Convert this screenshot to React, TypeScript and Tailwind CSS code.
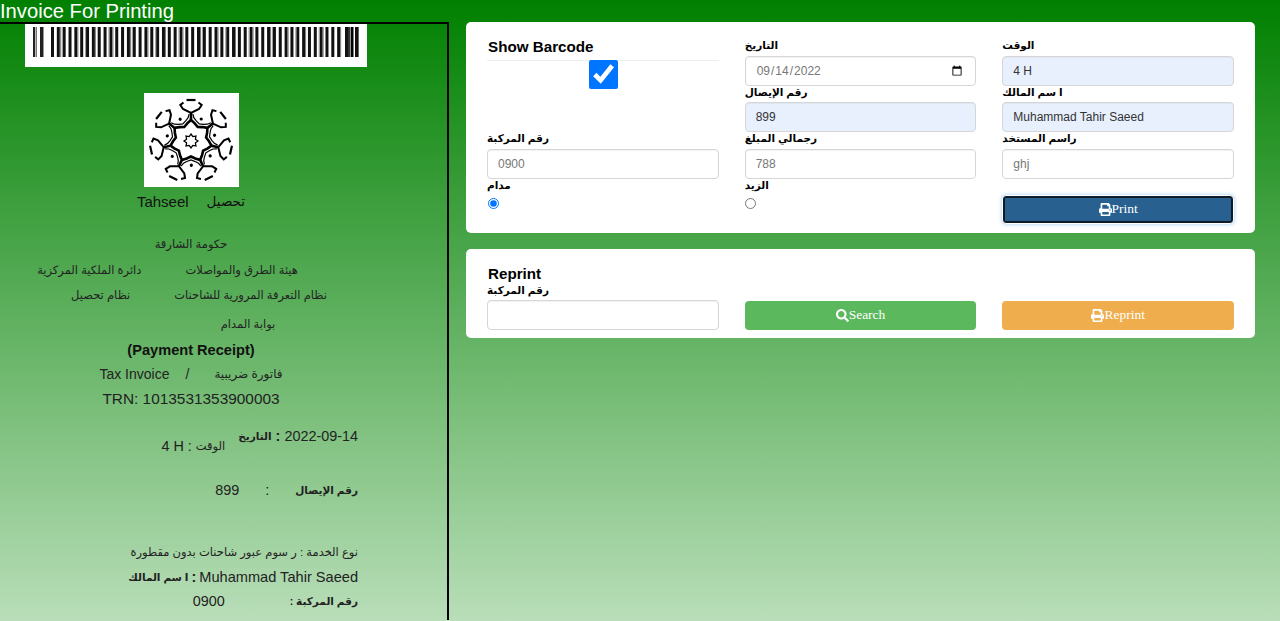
import { FaPrint, FaSearch } from 'react-icons/fa';

const SANS = 'font-["Liberation_Sans","DejaVu_Sans",sans-serif]';

// barcode bars as [x, width, colour]
const bars: [number, number, string][] = [
  [8, 2, '#222'], [10.5, 1.5, '#777'], [15, 3, '#222'], [18, 1, '#999'],
];
for (let i = 0; i < 50; i++) {
  const x = 26 + i * 5.84;
  bars.push([x, 3, '#111']);
  if (i % 3 === 1) bars.push([x + 3, 1, '#777']);
  if (i % 4 === 2) bars.push([x - 1, 1, '#999']);
}
bars.push([320, 3, '#111'], [323, 2.5, '#333'], [326, 2.5, '#000'], [330, 3, '#111'], [333, 1, '#666']);

const Barcode = () => (
  <svg viewBox="0 0 342 43" className="block w-[342px] h-[43px] bg-white">
    {bars.map(([x, w, c], i) => (
      <rect key={i} x={x} y={3} width={w} height={30} fill={c} />
    ))}
  </svg>
);

const polar = (deg: number, r: number) => {
  const a = (deg * Math.PI) / 180;
  return `${(r * Math.sin(a)).toFixed(2)} ${(-r * Math.cos(a)).toFixed(2)}`;
};

const starPoints = Array.from({ length: 16 }, (_, i) => polar(i * 22.5, i % 2 === 0 ? 7 : 4.8)).join(' L');

const Logo = () => (
  <svg viewBox="-47 -48 95 94" className="block w-[95px] h-[94px] bg-white" fill="none" stroke="#000">
    <path d={`M${starPoints}Z`} strokeWidth="1.3" />
    {Array.from({ length: 7 }, (_, k) => (
      <g key={k} transform={`rotate(${(k * 360) / 7})`}>
        <path d="M-4.5 -41H4.5" strokeWidth="2.2" />
        <path d="M-7.5 -38.5L-10.7 -36L-8 -32L0 -28L8 -32L10.7 -36L7.5 -38.5" strokeWidth="2" />
        <path d={`M${polar(0, 28)} L${polar(0, 21)} L${polar(12, 18)} L${polar(25.7, 15.5)} L${polar(39.4, 18)} L${polar(51.4, 21)}`} strokeWidth="2.6" />
        <path d={`M${polar(4, 27)} L${polar(7, 23.5)} L${polar(14, 21)} L${polar(25.7, 19)} L${polar(37.4, 21)} L${polar(44.4, 23.5)} L${polar(47.4, 27)}`} strokeWidth="1.2" />
        <circle cx="10.2" cy="-22" r="1.6" fill="#000" stroke="none" />
      </g>
    ))}
  </svg>
);

const fieldClass =
  'block w-full h-[30px] rounded-[4px] border border-[#d6d6d6] px-[10px] text-[12px] shadow-[inset_0_1px_1px_rgba(0,0,0,0.05)] outline-none';

const labelClass = 'block h-[16.5px] text-[10.5px] leading-[13px] font-bold text-black';

const Field = ({ label, value, fill, type = 'text' }: { label: string; value: string; fill?: boolean; type?: string }) => (
  <div>
    <label className={labelClass}>{label}</label>
    <input
      type={type}
      defaultValue={value}
      className={fill ? `${fieldClass} bg-[#e8f0fe] text-[#333]` : `${fieldClass} bg-white text-[#777]`}
    />
  </div>
);

const Receipt = () => (
  <div className="h-[598px] w-[449px] shrink-0 overflow-hidden border-t-2 border-r-2 border-black text-[#222]">
    <div className="pl-[25px]">
      <Barcode />
    </div>
    <div className="w-[382px] text-center text-[14px]">
      <div className="mt-[26px] flex justify-center">
        <Logo />
      </div>
      <div className="mt-[5px] flex justify-center gap-[18px] leading-[20px] text-[#111]">
        <span className="text-[15px]">Tahseel</span>
        <span className="text-[13.5px]">تحصيل</span>
      </div>
      <p className="mt-[22px] text-[11.5px] leading-[20px]">حكومة الشارقة</p>
      <div className="mt-[6px] flex justify-center gap-[44px] pr-[47px] text-[11.5px] leading-[20px]" dir="rtl">
        <span>هيئة الطرق والمواصلات</span>
        <span>دائرة الملكية المركزية</span>
      </div>
      <div className="mt-[5px] flex justify-center gap-[44px] pl-[16px] text-[11.5px] leading-[20px]" dir="rtl">
        <span>نظام التعرفة المرورية للشاحنات</span>
        <span>نظام تحصيل</span>
      </div>
      <p className="mt-[9px] pl-[114px] text-[11.5px] leading-[20px]">بوابة المدام</p>
      <p className="mt-[6px] text-[14.6px] font-bold leading-[20px] text-[#111]">(Payment Receipt)</p>
      <div className="mt-[4px] flex justify-center leading-[20px]" dir="rtl">
        <span className="ml-[25px] text-[12px]">فاتورة ضريبية</span>
        <span className="ml-[16px]">/</span>
        <span>Tax Invoice</span>
      </div>
      <p className="mt-[5px] text-[15.4px] leading-[20px]">TRN: 1013531353900003</p>
    </div>
    <div className="w-[382px] pr-[24px] text-[14.4px]" dir="rtl">
      <div className="mt-[17px] flex items-start gap-[13px]">
        <span className="flex gap-[4px] leading-[20px]">
          <span>2022-09-14</span>
          <b>:</b>
          <b className="text-[10.5px]">التاريخ</b>
        </span>
        <span className="mt-[10px] flex gap-[4px] leading-[20px]">
          <span className="text-[11.5px]">الوقت</span>
          <span>:</span>
          <span dir="ltr">4 H</span>
        </span>
      </div>
      <div className="mt-[24px] flex gap-[26px] leading-[20px]">
        <b className="text-[10.5px]">رقم الإيصال</b>
        <span>:</span>
        <span>899</span>
      </div>
      <p className="mt-[42px] text-[11.5px] leading-[20px]">نوع الخدمة : ر سوم عبور شاحنات بدون مقطورة</p>
      <p className="mt-[5px] flex gap-[3px] leading-[20px]">
        <span className="text-[14.6px]" dir="ltr">Muhammad Tahir Saeed</span>
        <b>:</b>
        <b className="text-[10.5px]">ا سم المالك</b>
      </p>
      <div className="mt-[4px] flex gap-[65px] leading-[20px]">
        <b className="text-[10.5px]">رقم المركبة :</b>
        <span>0900</span>
      </div>
    </div>
  </div>
);

const ActionButton = ({ className, children }: { className: string; children: React.ReactNode }) => (
  <button
    type="button"
    className={`flex h-[29px] w-full items-center justify-center rounded-[4px] font-["Liberation_Serif",serif] text-[13.5px] text-white ${className}`}
  >
    {children}
  </button>
);

export default function App() {
  return (
    <div className={`h-[621px] overflow-hidden bg-linear-to-b/srgb from-[#008000] to-[#b9deb9] ${SANS}`}>
      <h1 className="h-[22px] text-[20.2px] leading-[22px] font-normal text-white">Invoice For Printing</h1>
      <div className="flex">
        <Receipt />
        <div className="flex-1 pl-[17px] pr-[25px]">
          {/* main form card */}
          <div className="h-[211px] rounded-[5px] bg-white px-[21px] pt-[17px]">
            <div className="grid grid-cols-3 gap-x-[26px]">
              <div className="row-span-2">
                <h2 className="h-[21px] pl-[1px] text-[15.2px] leading-[15px] font-bold text-black">Show Barcode</h2>
                <div className="border-t border-[#eee]" />
                <div className="flex justify-center pl-[2px]">
                  <input type="checkbox" defaultChecked className="m-0 h-[29px] w-[29px] -translate-y-[1px] accent-[#0075ff]" />
                </div>
              </div>
              <Field label="التاريخ" value="2022-09-14" type="date" />
              <Field label="الوقت" value="4 H" fill />
              <Field label="رقم الإيصال" value="899" fill />
              <Field label="ا سم المالك" value="Muhammad Tahir Saeed" fill />
              <Field label="رقم المركبة" value="0900" />
              <Field label="رجمالي المبلغ" value="788" />
              <Field label="راسم المستخد" value="ghj" />
              <div>
                <label className={labelClass}>مدام</label>
                <input type="radio" name="gender" defaultChecked className="m-0 ml-[1px] mt-[3px] block h-[11px] w-[11px]" />
              </div>
              <div>
                <label className={labelClass}>الزيد</label>
                <input type="radio" name="gender" className="m-0 mt-[3px] block h-[11px] w-[11px]" />
              </div>
              <div className="pt-[16px]">
                <ActionButton className="border border-white bg-[#286090] pt-[1px] shadow-[inset_0_0_0_2px_#0f1c28,0_0_4px_#9ecaed]">
                  <FaPrint className="text-[13px]" />
                  Print
                </ActionButton>
              </div>
            </div>
          </div>
          {/* reprint card */}
          <div className="mt-[16px] h-[89px] rounded-[5px] bg-white px-[21px] pt-[16px]">
            <h2 className="h-[18px] pl-[1px] text-[15.2px] leading-[17px] font-bold text-black">Reprint</h2>
            <div className="grid grid-cols-3 items-end gap-x-[26px]">
              <div>
                <label className="block h-[17px] text-[10.5px] leading-[14px] font-bold text-black">رقم المركبة</label>
                <input type="text" className={`${fieldClass} bg-white`} />
              </div>
              <ActionButton className="bg-[#5cb85c]">
                <FaSearch className="text-[13px]" />
                Search
              </ActionButton>
              <ActionButton className="bg-[#f0ad4e]">
                <FaPrint className="text-[13px]" />
                Reprint
              </ActionButton>
            </div>
          </div>
        </div>
      </div>
    </div>
  );
}
